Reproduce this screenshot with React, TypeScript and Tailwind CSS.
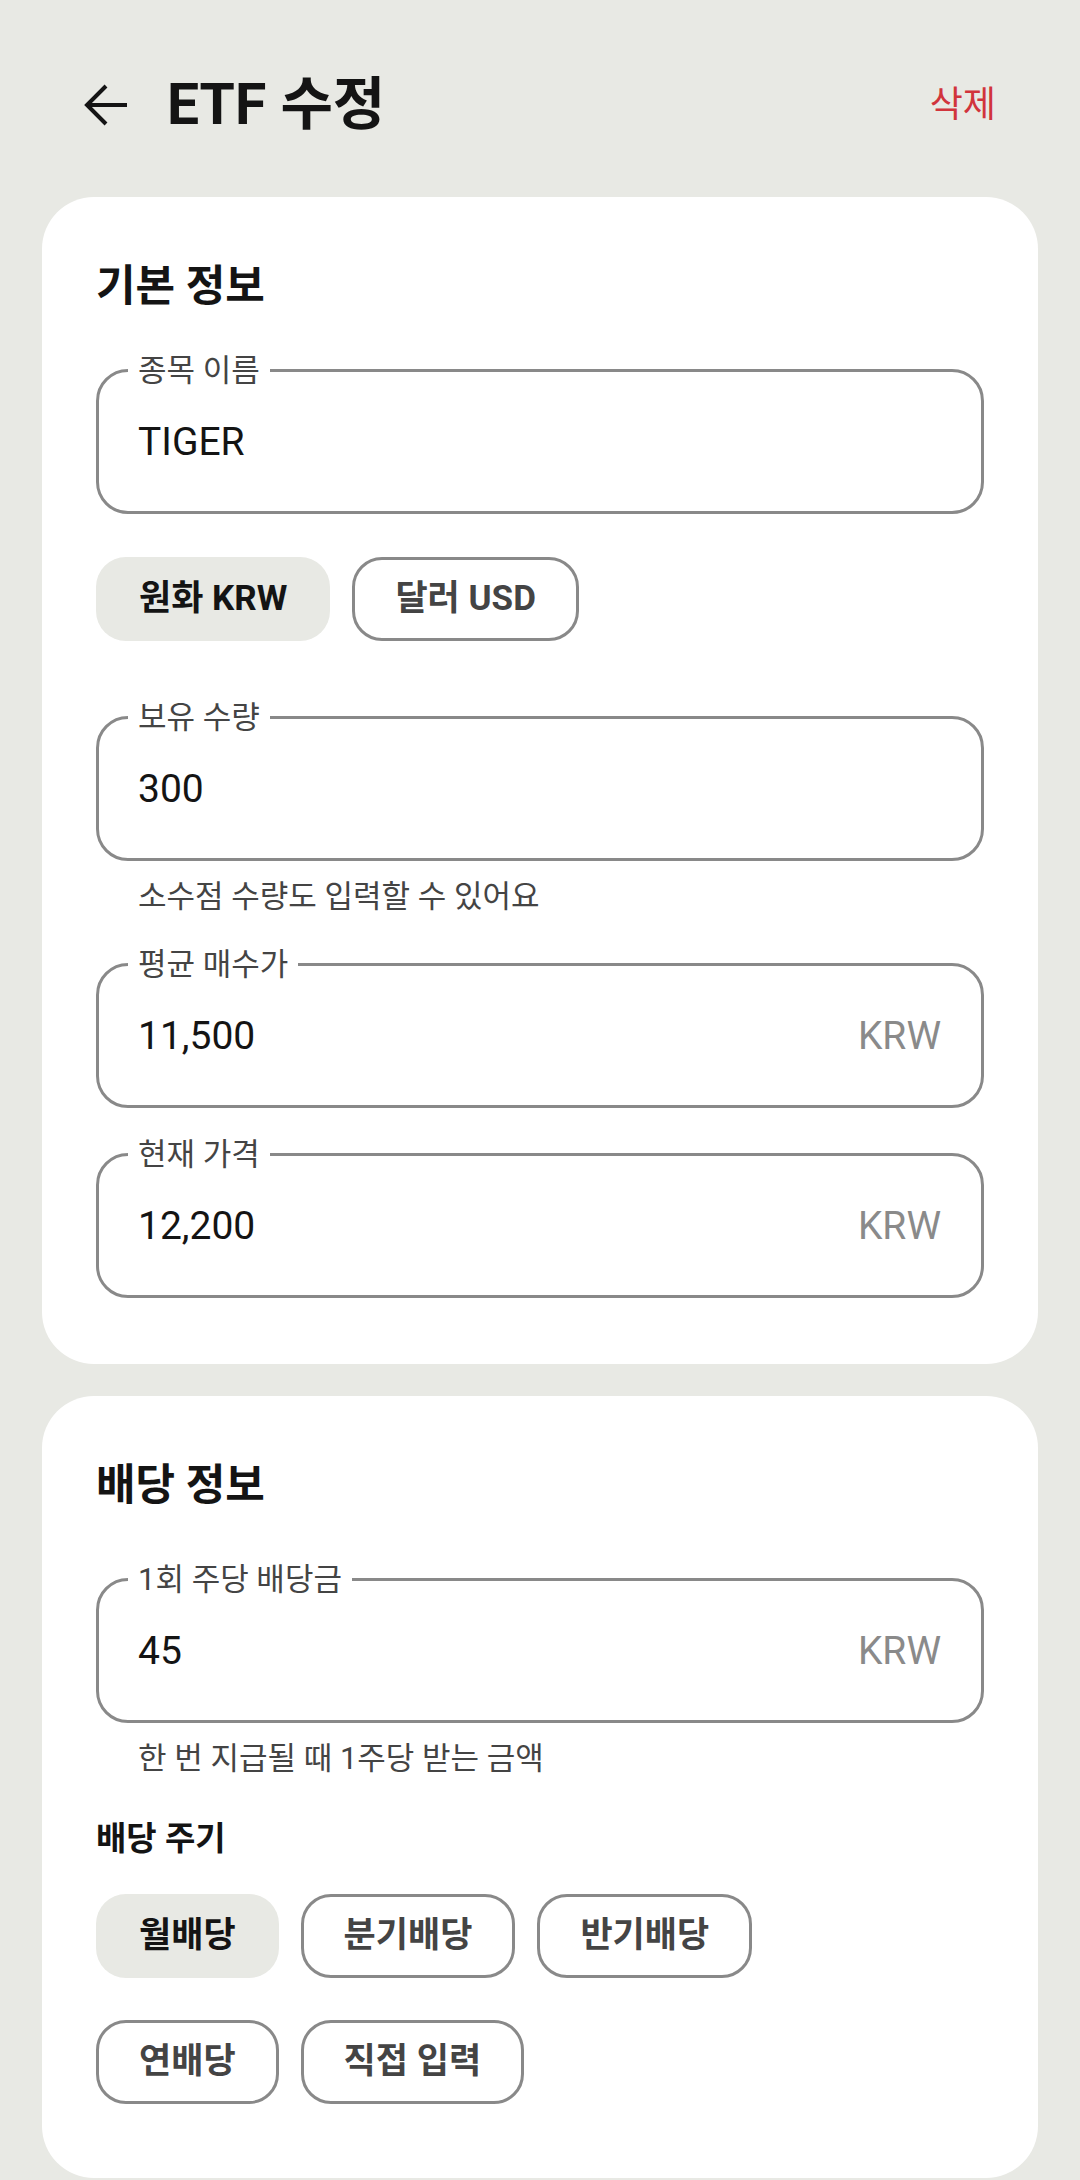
import React from "react";

function Field({
  label,
  value,
  suffix,
  className = "",
}: {
  label: string;
  value: string;
  suffix?: string;
  className?: string;
}) {
  return (
    <div
      className={`relative flex h-[145px] items-center rounded-[32px] border-[3px] border-[#898989] pl-[39px] pr-[40px] ${className}`}
    >
      <span className="absolute left-[29px] top-[-1.5px] -translate-y-1/2 bg-white px-[10px] text-[31px] leading-[36px] text-[#444444]">
        {label}
      </span>
      <span className="text-[39px] leading-[46px] text-[#141414]">{value}</span>
      {suffix ? (
        <span className="ml-auto text-[39px] leading-[46px] text-[#8a8a8a]">{suffix}</span>
      ) : null}
    </div>
  );
}

function Chip({ children, selected = false }: { children: React.ReactNode; selected?: boolean }) {
  return (
    <div
      className={
        selected
          ? "flex h-[84px] items-center rounded-[30px] border-[3px] border-transparent bg-[#e8e9e4] px-[40px] text-[35px] font-bold leading-[42px] text-[#141414]"
          : "flex h-[84px] items-center rounded-[30px] border-[3px] border-[#898989] bg-white px-[40px] text-[35px] font-bold leading-[42px] text-[#444444]"
      }
    >
      {children}
    </div>
  );
}

export default function App() {
  return (
    <div className="min-h-[2180px] bg-[#e8e9e4] pt-[70px] font-['Roboto','Noto_Sans_CJK_KR',sans-serif]">
      <header className="flex h-[70px] items-center justify-between px-[84px]">
        <div className="flex items-center">
          <svg width="44" height="44" viewBox="0 0 44 44" fill="none" stroke="#141414" strokeWidth="4">
            <path d="M3 22 H43" />
            <path d="M22 3 L3 22 L22 41" strokeLinejoin="miter" />
          </svg>
          <h1 className="ml-[39px] text-[57px] font-bold leading-[70px] text-[#141414]">ETF 수정</h1>
        </div>
        <button className="text-[36px] leading-[44px] text-[#d1343c]">삭제</button>
      </header>

      <main className="mt-[57px] flex flex-col gap-[32px] px-[42px]">
        <section className="rounded-[52px] bg-white px-[54px] pb-[66px] pt-[64px]">
          <h2 className="text-[43px] font-bold leading-[50px] text-[#141414]">기본 정보</h2>
          <Field className="mt-[58px]" label="종목 이름" value="TIGER" />
          <div className="mt-[43px] flex gap-[22px]">
            <Chip selected>원화 KRW</Chip>
            <Chip>달러 USD</Chip>
          </div>
          <Field className="mt-[75px]" label="보유 수량" value="300" />
          <p className="mt-[16px] pl-[42px] text-[31px] leading-[40px] text-[#444444]">
            소수점 수량도 입력할 수 있어요
          </p>
          <Field className="mt-[46px]" label="평균 매수가" value="11,500" suffix="KRW" />
          <Field className="mt-[45px]" label="현재 가격" value="12,200" suffix="KRW" />
        </section>

        <section className="rounded-[52px] bg-white px-[54px] pb-[74px] pt-[64px]">
          <h2 className="text-[43px] font-bold leading-[50px] text-[#141414]">배당 정보</h2>
          <Field className="mt-[68px]" label="1회 주당 배당금" value="45" suffix="KRW" />
          <p className="mt-[16px] pl-[42px] text-[31px] leading-[40px] text-[#444444]">
            한 번 지급될 때 1주당 받는 금액
          </p>
          <h3 className="mt-[40px] text-[33px] font-semibold leading-[40px] text-[#141414]">배당 주기</h3>
          <div className="mt-[35px] flex flex-col gap-[42px]">
            <div className="flex gap-[22px]">
              <Chip selected>월배당</Chip>
              <Chip>분기배당</Chip>
              <Chip>반기배당</Chip>
            </div>
            <div className="flex gap-[22px]">
              <Chip>연배당</Chip>
              <Chip>직접 입력</Chip>
            </div>
          </div>
        </section>
      </main>
    </div>
  );
}
